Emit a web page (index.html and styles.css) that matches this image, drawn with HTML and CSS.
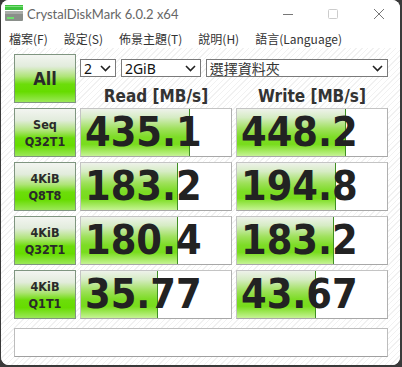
FILE: index.html
```html
<!DOCTYPE html>
<html lang="zh-Hant">
<head>
    <meta charset="UTF-8">
    <title>CrystalDiskMark 6.0.2 x64</title>
    <link rel="stylesheet" href="styles.css">
</head>
<body>
    <div class="window">
        <div class="titlebar">
            <svg class="app-icon" width="18" height="16" viewBox="0 0 18 16">
                <rect x="0" y="0" width="18" height="5" fill="#3cc23c"/>
                <rect x="0" y="1" width="18" height="1" fill="#7fe07f"/>
                <rect x="0" y="6" width="18" height="10" rx="1" fill="#8a8f8a"/>
                <rect x="0" y="6" width="18" height="3" fill="#a8aca8"/>
                <rect x="2" y="12" width="7" height="2" fill="#6ee06e"/>
            </svg>
            <span class="title">CrystalDiskMark 6.0.2 x64</span>
            <div class="controls">
                <svg width="46" height="28" viewBox="0 0 46 28"><path d="M21 14.5h10" stroke="#777" stroke-width="1"/></svg>
                <svg width="46" height="28" viewBox="0 0 46 28"><rect x="20.5" y="9.5" width="9" height="9" rx="1" fill="none" stroke="#ccc" stroke-width="1"/></svg>
                <svg width="46" height="28" viewBox="0 0 46 28"><path d="M20 9l10 10M30 9l-10 10" stroke="#777" stroke-width="1"/></svg>
            </div>
        </div>

        <div class="menubar">
            <span>檔案(F)</span>
            <span>設定(S)</span>
            <span>佈景主題(T)</span>
            <span>說明(H)</span>
            <span>語言(Language)</span>
        </div>

        <div class="content">
            <div class="grid">
                <div class="btn all">All</div>
                <div class="top">
                    <div class="selects">
                        <div class="select s-count">2<svg class="chev" width="11" height="7" viewBox="0 0 11 7"><path d="M1 1l4.5 4.5L10 1" fill="none" stroke="#222" stroke-width="1.6"/></svg></div>
                        <div class="select s-size">2GiB<svg class="chev" width="11" height="7" viewBox="0 0 11 7"><path d="M1 1l4.5 4.5L10 1" fill="none" stroke="#222" stroke-width="1.6"/></svg></div>
                        <div class="select s-drive">選擇資料夾<svg class="chev" width="11" height="7" viewBox="0 0 11 7"><path d="M1 1l4.5 4.5L10 1" fill="none" stroke="#222" stroke-width="1.6"/></svg></div>
                    </div>
                    <div class="heads">
                        <div class="head">Read [MB/s]</div>
                        <div class="head">Write [MB/s]</div>
                    </div>
                </div>

                <div class="btn label">Seq<br>Q32T1</div>
                <div class="value" style="--w: 109px">435.1</div>
                <div class="value" style="--w: 109px">448.2</div>

                <div class="btn label">4KiB<br>Q8T8</div>
                <div class="value" style="--w: 97px">183.2</div>
                <div class="value" style="--w: 99px">194.8</div>

                <div class="btn label">4KiB<br>Q32T1</div>
                <div class="value" style="--w: 97px">180.4</div>
                <div class="value" style="--w: 97px">183.2</div>

                <div class="btn label">4KiB<br>Q1T1</div>
                <div class="value" style="--w: 77px">35.77</div>
                <div class="value" style="--w: 79px">43.67</div>

                <div class="comment"></div>
            </div>
        </div>
    </div>
</body>
</html>
```

FILE: styles.css
```css
html, body {
    margin: 0;
    padding: 0;
}

body {
    background: #3a3a3a;
    width: 402px;
    height: 367px;
    overflow: hidden;
}

.window {
    width: 399px;
    height: 365px;
    margin-left: 1px;
    background: #fff;
    border-radius: 8px;
    overflow: hidden;
    display: flex;
    flex-direction: column;
}

.titlebar {
    height: 28px;
    display: flex;
    align-items: center;
    background: #fff;
}

.app-icon {
    margin-left: 4px;
    margin-top: -2px;
}

.title {
    margin-left: 4px;
    font-family: Lato, sans-serif;
    font-size: 13px;
    color: #666;
}

.controls {
    margin-left: auto;
    display: flex;
}

.menubar {
    height: 20px;
    display: flex;
    align-items: center;
    gap: 16px;
    padding-left: 8px;
    font-family: "Noto Sans CJK TC", sans-serif;
    font-size: 12px;
    color: #333;
    background: #fff;
}

.content {
    flex: 1;
    padding: 6px 13px 0 13px;
    background: repeating-linear-gradient(135deg, #ffffff 0, #ffffff 3px, #f1f1f1 3px, #f1f1f1 4px);
}

.grid {
    display: grid;
    grid-template-columns: 62px 152px 152px;
    grid-template-rows: 49px 49px 49px 49px 49px 29px;
    column-gap: 4px;
    row-gap: 5px;
}

.btn {
    box-sizing: border-box;
    border: 1px solid #7f9580;
    background: linear-gradient(to bottom, #f3f5f1 0%, #e2ecdc 24%, #aee476 46%, #6cdd0a 62%, #66dc00 78%, #9be858 100%);
    display: flex;
    align-items: center;
    justify-content: center;
    text-align: center;
    color: #2a2a2a;
    font-family: "DejaVu Sans Condensed", "DejaVu Sans", sans-serif;
    font-weight: bold;
}

.all {
    font-size: 18px;
}

.label {
    font-size: 12.5px;
    line-height: 17px;
}

.top {
    grid-column: 2 / 4;
    display: flex;
    flex-direction: column;
}

.selects {
    display: flex;
    gap: 5px;
    margin-top: 5px;
}

.select {
    box-sizing: border-box;
    height: 18px;
    border: 1px solid #7a7a7a;
    background: #fff;
    display: flex;
    align-items: center;
    padding-left: 3px;
    padding-right: 4px;
    font-family: "Noto Sans", sans-serif;
    font-size: 14px;
    color: #111;
}

.chev {
    margin-left: auto;
}

.s-count {
    width: 36px;
}

.s-size {
    width: 80px;
}

.s-drive {
    width: 183px;
    font-family: "Noto Sans CJK TC", sans-serif;
    font-size: 14px;
    color: #333;
}

.heads {
    display: flex;
    gap: 4px;
    margin-top: 9px;
}

.head {
    width: 152px;
    text-align: center;
    font-family: "DejaVu Sans Condensed", "DejaVu Sans", sans-serif;
    font-weight: bold;
    font-size: 17px;
    line-height: 20px;
    color: #333;
}

.value {
    box-sizing: border-box;
    border: 1px solid #c4c4c4;
    border-right-color: #b0b0b0;
    border-bottom-color: #a8a8a8;
    background-color: #fff;
    background-image:
        linear-gradient(#3f8f22, #3f8f22),
        linear-gradient(to bottom, #eef2ea 0%, #d6ecc4 18%, #9fe15c 42%, #7ddc26 60%, #78dc1c 75%, #b6ef7c 95%, #c6f296 100%);
    background-size: 1px 100%, var(--w) 100%;
    background-position: calc(var(--w) - 1px) 0, 0 0;
    background-repeat: no-repeat;
    padding-left: 4px;
    font-family: "DejaVu Sans Condensed", "DejaVu Sans", sans-serif;
    font-weight: bold;
    font-size: 41px;
    line-height: 47px;
    color: #222;
}

.comment {
    grid-column: 1 / 4;
    margin-top: 4px;
    box-sizing: border-box;
    height: 29px;
    border: 1px solid #bdbdbd;
    border-bottom-color: #a0a0a0;
    background: #fff;
}
```
